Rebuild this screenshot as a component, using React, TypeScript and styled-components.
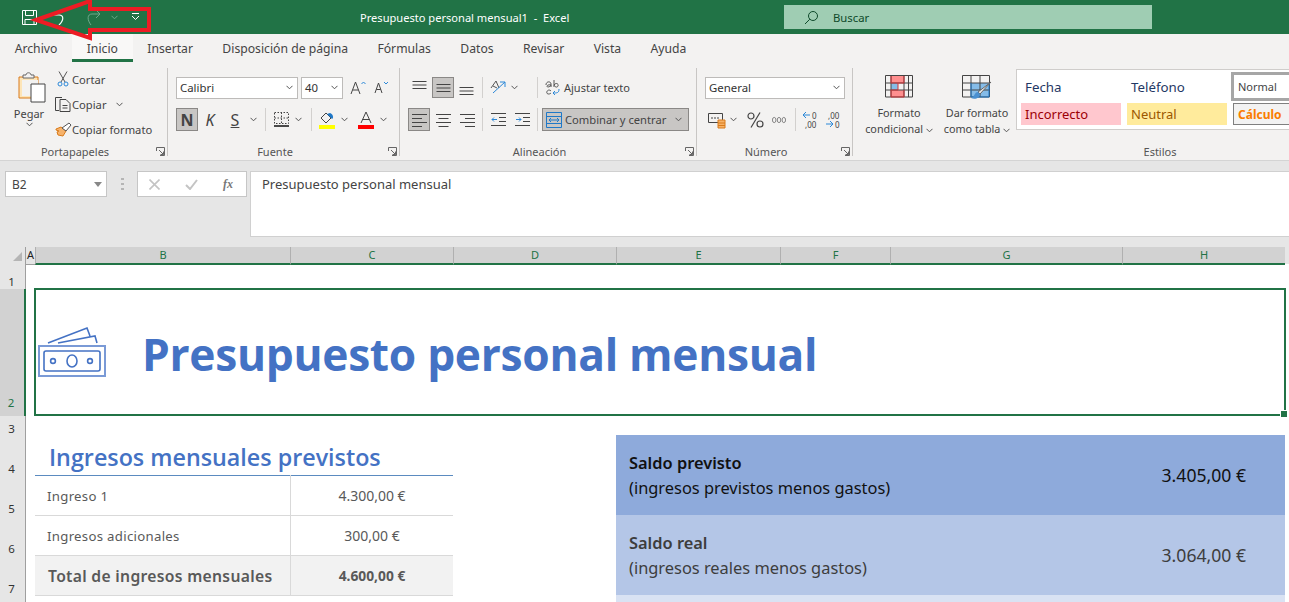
import React from "react"
import styled, { createGlobalStyle } from "styled-components"

const GREEN = "#217346"
const UI_FONT = `"Noto Sans", "Open Sans", sans-serif`
const SHEET_COLUMNS = "26px 9px 255px 163px 163px 164px 110px 232px 163px 4px"

const GlobalStyle = createGlobalStyle`
  html, body {
    margin: 0;
    padding: 0;
    background: #ffffff;
  }
  #root {
    width: 1289px;
    height: 602px;
    overflow: hidden;
  }
`

const Window = styled.div`
  position: relative;
  width: 1289px;
  height: 602px;
  overflow: hidden;
  font-family: ${UI_FONT};
  color: #444444;
`

/* title bar */
const TitleBar = styled.div`
  display: flex;
  align-items: center;
  height: 34px;
  background: ${GREEN};
  padding-left: 20px;
`
const QuickAccess = styled.div`
  display: flex;
  align-items: center;
  width: 340px;
  height: 34px;
`
const QuickSlot = styled.div<{ $w: number }>`
  display: flex;
  align-items: center;
  justify-content: center;
  width: ${(p) => p.$w}px;
  flex: none;
`
const DocTitle = styled.div`
  width: 424px;
  color: #ffffff;
  font-size: 11.1px;
  white-space: pre;
`
const SearchBox = styled.div`
  display: flex;
  align-items: center;
  gap: 14px;
  width: 368px;
  height: 24px;
  background: #9fcdb3;
  padding-left: 20px;
  box-sizing: border-box;
  color: #0e4a2a;
  font-size: 11.3px;
`

/* tabs */
const TabBar = styled.div`
  display: flex;
  height: 28px;
  background: #f3f2f1;
`
const Tab = styled.div<{ $active?: boolean }>`
  padding: 0 14.7px;
  line-height: 30px;
  font-size: 12.2px;
  box-sizing: border-box;
  background: ${(p) => (p.$active ? "#f9f8f7" : "transparent")};
  border-bottom: ${(p) => (p.$active ? `3px solid ${GREEN}` : "none")};
`

/* ribbon */
const Ribbon = styled.div`
  display: flex;
  height: 99px;
  padding-top: 6px;
  box-sizing: border-box;
  background: #f3f2f1;
  border-bottom: 1px solid #d4d4d4;
  overflow: hidden;
`
const Group = styled.div<{ $w: number; $last?: boolean }>`
  position: relative;
  display: flex;
  flex-direction: column;
  flex: none;
  width: ${(p) => p.$w}px;
  height: 88px;
  box-sizing: border-box;
  border-right: ${(p) => (p.$last ? "none" : "1px solid #c8c6c4")};
`
const GroupBody = styled.div<{ $top?: number; $left?: number; $row?: boolean }>`
  display: flex;
  flex-direction: ${(p) => (p.$row ? "row" : "column")};
  flex: 1;
  min-height: 0;
  padding-top: ${(p) => p.$top ?? 9}px;
  padding-left: ${(p) => p.$left ?? 8}px;
`
const GroupLabel = styled.div<{ $plain?: boolean }>`
  height: 20px;
  margin-bottom: -6px;
  padding-right: ${(p) => (p.$plain ? 0 : 17)}px;
  line-height: 20px;
  text-align: center;
  font-size: 11px;
  color: #555555;
`
const Launcher = styled.div`
  position: absolute;
  right: 2px;
  bottom: 0;
  width: 9px;
  height: 9px;
  line-height: 0;
`
const ControlRow = styled.div<{ $top?: number }>`
  display: flex;
  align-items: center;
  height: ${(p) => (p.$top ? 23 : 21)}px;
  margin-top: ${(p) => p.$top ?? 0}px;
  flex: none;
`
const Slot = styled.div<{ $w: number; $pressed?: boolean; $ml?: number }>`
  display: flex;
  align-items: center;
  justify-content: center;
  flex: none;
  width: ${(p) => p.$w}px;
  height: 100%;
  margin-left: ${(p) => p.$ml ?? 0}px;
  box-sizing: border-box;
  background: ${(p) => (p.$pressed ? "#c8c6c4" : "transparent")};
  border: ${(p) => (p.$pressed ? "1px solid #8a8886" : "none")};
`
const Sep = styled.div<{ $w: number }>`
  display: flex;
  justify-content: center;
  flex: none;
  width: ${(p) => p.$w}px;
  height: 100%;
  &::after {
    content: "";
    width: 1px;
    height: 100%;
    background: #d2d0ce;
  }
`
const Select = styled.div<{ $w: number; $ml?: number }>`
  display: flex;
  align-items: center;
  justify-content: space-between;
  flex: none;
  width: ${(p) => p.$w}px;
  height: 22px;
  margin-left: ${(p) => p.$ml ?? 0}px;
  padding: 0 4px 0 3px;
  box-sizing: border-box;
  background: #ffffff;
  border: 1px solid #bdbbb9;
  font-size: 11.4px;
  color: #333333;
`
const PasteColumn = styled.div`
  display: flex;
  flex-direction: column;
  align-items: center;
  flex: none;
  width: 58px;
  padding-top: 4px;
  font-size: 11px;
  & > svg:first-child {
    margin-left: 5px;
  }
`
const PasteText = styled.div`
  margin-top: 3px;
  line-height: 16px;
`
const ClipColumn = styled.div`
  display: flex;
  flex-direction: column;
  gap: 3px;
  margin-left: -4px;
`
const ClipRow = styled.div`
  display: flex;
  align-items: center;
  height: 22px;
  font-size: 11.2px;
  white-space: nowrap;
`
const ClipIcon = styled.div`
  display: flex;
  justify-content: center;
  width: 18px;
  flex: none;
`
const MergeButton = styled.div`
  display: flex;
  align-items: center;
  flex: none;
  width: 147px;
  height: 23px;
  margin-left: 2px;
  padding: 0 6px 0 3px;
  box-sizing: border-box;
  background: #c8c6c4;
  border: 1px solid #8a8886;
  font-size: 11.2px;
  white-space: nowrap;
  & > span {
    flex: 1;
    margin-left: 3px;
  }
`
const WrapText = styled.div`
  font-size: 11px;
  white-space: nowrap;
  margin-left: 2px;
`
const BigButton = styled.div<{ $w: number; $ml?: number }>`
  display: flex;
  flex-direction: column;
  align-items: center;
  flex: none;
  width: ${(p) => p.$w}px;
  margin-left: ${(p) => p.$ml ?? 0}px;
  font-size: 10.8px;
  line-height: 16px;
  white-space: nowrap;
`
const BigIcon = styled.div`
  height: 28px;
  padding-top: 5px;
  margin-bottom: 2px;
  line-height: 0;
`
const Gallery = styled.div`
  display: grid;
  grid-template-columns: 100px 100px 100px;
  grid-template-rows: 29px 22px;
  column-gap: 6px;
  row-gap: 2px;
  flex: none;
  width: 320px;
  height: 61px;
  margin: -1px 0 0 3px;
  padding: 2px 0 0 4px;
  box-sizing: border-box;
  background: #ffffff;
  border: 1px solid #cfcdcb;
`
const StyleCell = styled.div<{
  $bg?: string
  $color: string
  $bold?: boolean
  $box?: string
  $shift?: number
  $size?: number
}>`
  display: flex;
  align-items: center;
  padding-left: 4px;
  box-sizing: border-box;
  margin-left: ${(p) => p.$shift ?? 0}px;
  background: ${(p) => p.$bg ?? "transparent"};
  color: ${(p) => p.$color};
  font-size: ${(p) => p.$size ?? 13}px;
  font-weight: ${(p) => (p.$bold ? 700 : 400)};
  border: ${(p) => p.$box ?? "none"};
`
const DigitsIcon = styled.svg`
  overflow: visible;
`
const TinyDigits = styled.text`
  font-family: ${UI_FONT};
  font-size: 8px;
  fill: #444444;
`

/* formula bar */
const FormulaBand = styled.div`
  display: flex;
  align-items: flex-start;
  height: 86px;
  padding: 10px 0 0 5px;
  box-sizing: border-box;
  background: #e6e6e6;
`
const NameBox = styled.div`
  display: flex;
  align-items: center;
  justify-content: space-between;
  width: 102px;
  height: 26px;
  padding: 0 4px 0 6px;
  box-sizing: border-box;
  background: #ffffff;
  border: 1px solid #c6c6c6;
  font-size: 12px;
`
const Grip = styled.div`
  display: flex;
  justify-content: center;
  width: 30px;
  height: 26px;
  align-items: center;
`
const FunctionBox = styled.div`
  display: flex;
  align-items: center;
  justify-content: space-between;
  width: 110px;
  height: 26px;
  padding: 0 13px 0 11px;
  box-sizing: border-box;
  background: #ffffff;
  border: 1px solid #c6c6c6;
`
const FunctionMark = styled.span`
  font-family: "Liberation Serif", serif;
  font-style: italic;
  font-weight: 700;
  font-size: 12px;
  color: #777777;
`
const FormulaInput = styled.div`
  flex: 1;
  height: 66px;
  margin-left: 3px;
  padding: 3px 0 0 11px;
  box-sizing: border-box;
  background: #ffffff;
  border: 1px solid #d0d0d0;
  border-right: none;
  font-size: 13px;
  color: #444444;
`

/* sheet */
const ColumnHeader = styled.div`
  display: grid;
  grid-template-columns: ${SHEET_COLUMNS};
  height: 17px;
  background: #e6e6e6;
`
const Corner = styled.div`
  display: flex;
  justify-content: flex-end;
  align-items: flex-end;
  padding: 0 3px 3px 0;
  border-right: 1px solid #9f9f9f;
  border-bottom: 1px solid #9f9f9f;
`
const ColumnCell = styled.div<{ $plain?: boolean }>`
  text-align: center;
  font-size: 11px;
  line-height: 16px;
  box-sizing: border-box;
  background: ${(p) => (p.$plain ? "#e6e6e6" : "#d2d2d2")};
  color: ${(p) => (p.$plain ? "#222222" : GREEN)};
  border-left: ${(p) => (p.$plain ? "none" : "1px solid #b0b0b0")};
  border-bottom: ${(p) => (p.$plain ? "1px solid #9f9f9f" : `2px solid ${GREEN}`)};
`
const Sheet = styled.div`
  display: grid;
  grid-template-columns: ${SHEET_COLUMNS};
  grid-template-rows: 25px 127px 19px 40px 40px 40px 40px 40px;
  background: #ffffff;
`
const RowHead = styled.div<{ $row: number; $active?: boolean; $lift?: number }>`
  grid-column: 1;
  grid-row: ${(p) => p.$row};
  display: flex;
  align-items: flex-end;
  justify-content: center;
  padding: 0 2px ${(p) => p.$lift ?? 0}px 0;
  margin-bottom: -1px;
  box-sizing: border-box;
  font-size: 11.5px;
  line-height: 12px;
  background: ${(p) => (p.$active ? "#d2d2d2" : "#e6e6e6")};
  color: ${(p) => (p.$active ? GREEN : "#333333")};
  border-bottom: 1px solid #a8a8a8;
  border-right: ${(p) => (p.$active ? `2px solid ${GREEN}` : "1px solid #9f9f9f")};
`
const TitleCell = styled.div`
  grid-column: 3 / 10;
  grid-row: 2;
  position: relative;
  display: flex;
  align-items: center;
  margin: -1px -1px 0 -1px;
  padding: 0 0 0 2px;
  box-sizing: border-box;
  border: 2px solid ${GREEN};
`
const FillHandle = styled.div`
  position: absolute;
  right: -4px;
  bottom: -4px;
  width: 6px;
  height: 6px;
  background: ${GREEN};
  border: 1px solid #ffffff;
`
const MainTitle = styled.div`
  margin: 0 0 0 36px;
  padding-top: 4px;
  color: #4472c4;
  font-family: "Open Sans", sans-serif;
  font-weight: 700;
  font-size: 44.3px;
  letter-spacing: -0.3px;
  white-space: nowrap;
`
const SectionHead = styled.div`
  grid-column: 3 / 5;
  grid-row: 4;
  display: flex;
  align-items: center;
  margin-bottom: -1px;
  padding: 3px 0 0 14px;
  box-sizing: border-box;
  color: #4472c4;
  font-family: "Open Sans", sans-serif;
  font-weight: 600;
  font-size: 23.3px;
  border-bottom: 1px solid #5b8bc0;
`
const LabelCell = styled.div<{ $row: number; $total?: boolean }>`
  grid-column: 3;
  grid-row: ${(p) => p.$row};
  display: flex;
  align-items: center;
  margin-top: ${(p) => (p.$total ? 1 : 0)}px;
  margin-bottom: -1px;
  padding: ${(p) => (p.$total ? 0 : 1)}px 0 0 ${(p) => (p.$total ? 13 : 12)}px;
  box-sizing: border-box;
  color: #595959;
  font-size: ${(p) => (p.$total ? 15.7 : 13.2)}px;
  font-weight: ${(p) => (p.$total ? 600 : 400)};
  letter-spacing: 0.3px;
  background: ${(p) => (p.$total ? "#f2f2f2" : "transparent")};
  border-bottom: 1px solid #d9d9d9;
`
const AmountCell = styled.div<{ $row: number; $total?: boolean }>`
  grid-column: 4;
  grid-row: ${(p) => p.$row};
  display: flex;
  align-items: center;
  justify-content: center;
  margin-top: ${(p) => (p.$total ? 1 : 0)}px;
  margin-bottom: -1px;
  padding-top: ${(p) => (p.$total ? 0 : 1)}px;
  box-sizing: border-box;
  color: #595959;
  font-size: ${(p) => (p.$total ? 13.8 : 14)}px;
  font-weight: ${(p) => (p.$total ? 700 : 400)};
  background: ${(p) => (p.$total ? "#f2f2f2" : "transparent")};
  border-left: 1px solid #d9d9d9;
  border-bottom: 1px solid #d9d9d9;
`
const BalanceRow = styled.div<{ $from: number; $to: number; $bg: string; $dark?: boolean }>`
  grid-column: 6 / 10;
  grid-row: ${(p) => p.$from} / ${(p) => p.$to};
  display: flex;
  align-items: center;
  justify-content: space-between;
  padding: 0 39px 0 13px;
  background: ${(p) => p.$bg};
  color: ${(p) => (p.$dark ? "#111111" : "#3d3d3d")};
`
const BalanceText = styled.div`
  font-size: 16.4px;
  line-height: 25px;
  & > strong {
    display: block;
    font-weight: 600;
  }
`
const BalanceValue = styled.div`
  font-size: 17.6px;
`
const MarkArrow = styled.svg`
  position: absolute;
  left: 0;
  top: 0;
  pointer-events: none;
`

/* icons */
const Chevron = ({ color = "#555555" }: { color?: string }) => (
  <svg width="7" height="5" viewBox="0 0 7 5" fill="none">
    <path d="M0.5 0.8 3.5 3.8 6.5 0.8" stroke={color} strokeWidth="1" />
  </svg>
)
const Lines = ({ widths, left = 0 }: { widths: number[]; left?: number }) => (
  <svg width="15" height="14" viewBox="0 0 15 14" stroke="#444444" strokeWidth="1">
    {widths.map((w, i) => (
      <path key={i} d={`M${left === 2 ? 15 - w : left === 1 ? (15 - w) / 2 : 0} ${1.5 + i * 4}h${w}`} />
    ))}
  </svg>
)
const VAlign = ({ offset }: { offset: number }) => (
  <svg width="15" height="14" viewBox="0 0 15 14" stroke="#444444" strokeWidth="1">
    {[0, 3.5, 7].map((y) => (
      <path key={y} d={`M0.5 ${offset + y + 0.5}h14`} />
    ))}
  </svg>
)
const Launch = () => (
  <svg width="9" height="9" viewBox="0 0 9 9" fill="none" stroke="#666666">
    <path d="M0.5 4V0.5H8.5V8.5H4M3 3 7.5 7.5M7.5 4.5V7.5H4.5" />
  </svg>
)
const FormatTableIcon = () => (
  <svg width="29" height="23" viewBox="0 0 29 23">
    <path d="M6 1h13v7H6zM6 15h13v7H6z" fill="#ff8f8f" />
    <path d="M6 8h7v7H6z" fill="#85bce8" />
    <path d="M0.5 .5h27v21.5H.5zM.5 8h27M.5 15h27M6 .5v21.5M19 .5v21.5M23.5 .5v21.5" fill="none" stroke="#444444" />
    <path d="M6 1v7h7v7h-7v7h13v-7M19 1v7h-6" fill="none" stroke="#d13438" />
  </svg>
)
const TableBrushIcon = () => (
  <svg width="30" height="28" viewBox="0 0 30 28">
    <path d="M9 8h18v14H9z" fill="#85bce8" />
    <path d="M.5 .5h27v21.5H.5zM.5 8h27M.5 15h27M9 .5v21.5M18 .5v21.5" fill="none" stroke="#444444" />
    <path d="M9 8v14h18V8" fill="none" stroke="#1e78c8" />
    <path d="M29 7 18 19l-2-2z" fill="#e8e8e8" stroke="#666666" />
    <path d="M16 17c-4 0-3 5-7 6 4 2 9 0 9-4z" fill="#4a90d0" />
  </svg>
)
const MoneyIcon = () => (
  <svg width="68" height="52" viewBox="0 0 68 52" fill="none" stroke="#4472c4" strokeWidth="1.6">
    <path d="M10 17 49 2l3 8M20 17l37-7 2 7" />
    <rect x="1" y="20" width="66" height="30" stroke="#7a9ad6" strokeWidth="2" />
    <rect x="6" y="25" width="56" height="20" rx="2" />
    <ellipse cx="34" cy="35" rx="5" ry="6" />
    <circle cx="15" cy="35" r="2.4" />
    <circle cx="52" cy="35" r="2.4" />
  </svg>
)

const App: React.FC = () => {
  return (
    <Window>
      <GlobalStyle />
      <TitleBar>
        <QuickAccess>
          <QuickSlot $w={18}>
            <svg width="17" height="17" viewBox="0 0 17 17" fill="none" stroke="#ffffff">
              <path d="M1.5 1.5h14v14h-14zM4.5 1.5v5h8v-5M4 15.5v-5h9v5" />
            </svg>
          </QuickSlot>
          <QuickSlot $w={38}>
            <svg width="18" height="16" viewBox="0 0 18 16" fill="none" stroke="#ffffff">
              <path d="M4 6h7c5 0 5 5 0 10" strokeWidth="1.2" />
            </svg>
          </QuickSlot>
          <QuickSlot $w={0}>
            <Chevron color="#ffffff" />
          </QuickSlot>
          <QuickSlot $w={34}>
            <svg width="18" height="18" viewBox="0 0 18 18" fill="none" stroke="#6ea88a">
              <path d="M15 6H8c-5 0-5 6-1 11M12 2l4 4-4 4" />
            </svg>
          </QuickSlot>
          <QuickSlot $w={8}>
            <Chevron color="#6ea88a" />
          </QuickSlot>
          <QuickSlot $w={34}>
            <svg width="9" height="8" viewBox="0 0 9 8" fill="none" stroke="#ffffff">
              <path d="M1 .5h7M1 3 4.5 6.5 8 3" />
            </svg>
          </QuickSlot>
        </QuickAccess>
        <DocTitle>{"Presupuesto personal mensual1  -  Excel"}</DocTitle>
        <SearchBox>
          <svg width="15" height="15" viewBox="0 0 15 15" fill="none" stroke="#0e4a2a">
            <circle cx="9" cy="6" r="4.5" />
            <path d="M5.8 9.2 1 14" />
          </svg>
          Buscar
        </SearchBox>
      </TitleBar>

      <TabBar>
        <Tab>Archivo</Tab>
        <Tab $active>Inicio</Tab>
        <Tab>Insertar</Tab>
        <Tab>Disposición de página</Tab>
        <Tab>Fórmulas</Tab>
        <Tab>Datos</Tab>
        <Tab>Revisar</Tab>
        <Tab>Vista</Tab>
        <Tab>Ayuda</Tab>
      </TabBar>

      <Ribbon>
        <Group $w={168}>
          <GroupBody $row $top={0} $left={0}>
            <PasteColumn>
              <svg width="28" height="31" viewBox="0 0 28 31" fill="none">
                <path d="M1 5h19v21H1z" fill="#fde5b8" stroke="#d97b1a" />
                <path d="M4 8h16v16H4z" fill="#f3f2f1" />
                <path d="M5 5V3h3c0-3 5-3 5 0h3v3H5z" fill="#f3f2f1" stroke="#666666" />
                <path d="M13 12h14v18H13z" fill="#ffffff" stroke="#444444" />
              </svg>
              <PasteText>Pegar</PasteText>
              <Chevron />
            </PasteColumn>
            <ClipColumn>
              <ClipRow>
                <ClipIcon>
                  <svg width="12" height="16" viewBox="0 0 12 16" fill="none">
                    <path d="M2 .5 8 11M10 .5 4 11" stroke="#555555" />
                    <circle cx="3" cy="13" r="2" stroke="#2b88d8" />
                    <circle cx="9" cy="13" r="2" stroke="#2b88d8" />
                  </svg>
                </ClipIcon>
                Cortar
              </ClipRow>
              <ClipRow>
                <ClipIcon>
                  <svg width="16" height="16" viewBox="0 0 16 16" fill="none" stroke="#444444">
                    <path d="M4 14.5H.5v-13H7M5 3.5h6l4 4v8H5zM7.5 9.5h5M7.5 12h5" />
                  </svg>
                </ClipIcon>
                Copiar
                <QuickSlot $w={26}>
                  <Chevron />
                </QuickSlot>
              </ClipRow>
              <ClipRow>
                <ClipIcon>
                  <svg width="17" height="15" viewBox="0 0 17 15" fill="none">
                    <path d="M1 7l5-2 5 4-3 5-5-1-1-3 2-1-3-1z" fill="#f6b26b" stroke="#d97b1a" />
                    <path d="M7 6l7-5 2 2-5 6z" fill="#ffffff" stroke="#555555" />
                  </svg>
                </ClipIcon>
                Copiar formato
              </ClipRow>
            </ClipColumn>
          </GroupBody>
          <GroupLabel>Portapapeles</GroupLabel>
          <Launcher>
            <Launch />
          </Launcher>
        </Group>

        <Group $w={232}>
          <GroupBody>
            <ControlRow>
              <Select $w={122}>
                Calibri
                <Chevron />
              </Select>
              <Select $w={42} $ml={3}>
                40
                <Chevron />
              </Select>
              <Slot $w={22} $ml={4}>
                <svg width="16" height="14" viewBox="0 0 16 14" fill="none" stroke="#444444">
                  <path d="M1 13 5.5 1 10 13M2.8 9h5.4" />
                  <path d="M11.5 3 13.5 1l2 2" stroke="#2b88d8" />
                </svg>
              </Slot>
              <Slot $w={24}>
                <svg width="15" height="13" viewBox="0 0 15 13" fill="none" stroke="#444444">
                  <path d="M1 12 4.5 2 8 12M2.4 8.5h4.2" />
                  <path d="M10 1l2 2 2-2" stroke="#2b88d8" />
                </svg>
              </Slot>
            </ControlRow>
            <ControlRow $top={10}>
              <Slot $w={22} $pressed>
                <strong>N</strong>
              </Slot>
              <Slot $w={24}>
                <em>K</em>
              </Slot>
              <Slot $w={26}>
                <u>S</u>
              </Slot>
              <Slot $w={10}>
                <Chevron />
              </Slot>
              <Sep $w={14} />
              <Slot $w={18}>
                <svg width="15" height="15" viewBox="0 0 15 15" fill="none" stroke="#444444">
                  <path d="M.5.5h14v11H.5zM7.5.5v11M.5 6h14" strokeDasharray="1.5 1.5" />
                  <path d="M0 14h15" stroke="#111111" strokeWidth="1.5" />
                </svg>
              </Slot>
              <Slot $w={16}>
                <Chevron />
              </Slot>
              <Sep $w={10} />
              <Slot $w={22}>
                <svg width="16" height="18" viewBox="0 0 16 18">
                  <path d="M2 7l5-5 5 5-5 5z" fill="none" stroke="#444444" />
                  <path d="M8 3l5 5c2-1 1-5-2-6z" fill="#1e78c8" />
                  <path d="M0 14h16v4H0z" fill="#ffff00" />
                </svg>
              </Slot>
              <Slot $w={12}>
                <Chevron />
              </Slot>
              <Slot $w={16} $ml={8}>
                <svg width="16" height="18" viewBox="0 0 16 18" fill="none">
                  <path d="M3 12 8 1l5 11M4.6 8.5h6.8" stroke="#444444" />
                  <path d="M0 14h16v4H0z" fill="#ff0000" />
                </svg>
              </Slot>
              <Slot $w={18}>
                <Chevron />
              </Slot>
            </ControlRow>
          </GroupBody>
          <GroupLabel>Fuente</GroupLabel>
          <Launcher>
            <Launch />
          </Launcher>
        </Group>

        <Group $w={297}>
          <GroupBody>
            <ControlRow>
              <Slot $w={22}>
                <VAlign offset={0} />
              </Slot>
              <Slot $w={22} $ml={2} $pressed>
                <VAlign offset={3} />
              </Slot>
              <Slot $w={24}>
                <VAlign offset={6} />
              </Slot>
              <Sep $w={8} />
              <Slot $w={24}>
                <svg width="17" height="17" viewBox="0 0 17 17" fill="none" stroke="#555555">
                  <path d="M1 9 6 2l3 7M3 7l4 2" />
                  <path d="M3 14 15 3M10 3h5v5" stroke="#2b88d8" />
                </svg>
              </Slot>
              <Slot $w={8}>
                <Chevron />
              </Slot>
              <Slot $w={14} />
              <Sep $w={10} />
              <Slot $w={20}>
                <svg width="15" height="17" viewBox="0 0 15 17" fill="none" stroke="#555555">
                  <path d="M1 6c0-4 5-4 5-1v3M6 6c-4-1-5 2-3 2 1 0 3-1 3-2M9 1v7M9 6c2-3 5-1 4 1s-3 1-4-1M6 12c-3-3-6 2-3 3 1 0 2 0 3-1" />
                  <path d="M14 10c0 4-2 4-6 4M10 12l-2 2 2 2" stroke="#2b88d8" />
                </svg>
              </Slot>
              <WrapText>Ajustar texto</WrapText>
            </ControlRow>
            <ControlRow $top={10}>
              <Slot $w={22} $pressed>
                <Lines widths={[15, 10, 15, 10]} />
              </Slot>
              <Slot $w={26}>
                <Lines widths={[15, 10, 15, 10]} left={1} />
              </Slot>
              <Slot $w={22}>
                <Lines widths={[15, 10, 15, 10]} left={2} />
              </Slot>
              <Sep $w={8} />
              <Slot $w={24}>
                <svg width="15" height="13" viewBox="0 0 15 13" fill="none" stroke="#444444">
                  <path d="M0 .5h15M8 4.5h7M8 8.5h7M0 12.5h15" />
                  <path d="M6 6.5H1M3 4.5l-2 2 2 2" stroke="#2b88d8" />
                </svg>
              </Slot>
              <Slot $w={24}>
                <svg width="15" height="13" viewBox="0 0 15 13" fill="none" stroke="#444444">
                  <path d="M0 .5h15M8 4.5h7M8 8.5h7M0 12.5h15" />
                  <path d="M1 6.5h5M4 4.5l2 2-2 2" stroke="#2b88d8" />
                </svg>
              </Slot>
              <Sep $w={6} />
              <MergeButton>
                <svg width="16" height="16" viewBox="0 0 16 16" fill="none">
                  <path d="M.5.5h15v15H.5zM.5 4.5h15M.5 11.5h15" stroke="#1e78c8" />
                  <path d="M3 8h10M5 6 3 8l2 2M11 6l2 2-2 2" stroke="#1e78c8" />
                </svg>
                <span>Combinar y centrar</span>
                <Chevron />
              </MergeButton>
            </ControlRow>
          </GroupBody>
          <GroupLabel>Alineación</GroupLabel>
          <Launcher>
            <Launch />
          </Launcher>
        </Group>

        <Group $w={156}>
          <GroupBody>
            <ControlRow>
              <Select $w={140}>
                General
                <Chevron />
              </Select>
            </ControlRow>
            <ControlRow $top={10}>
              <Slot $w={23}>
                <svg width="18" height="18" viewBox="0 0 18 18" fill="none">
                  <path d="M.5 2.5h14v9H.5z" stroke="#444444" />
                  <path d="M3 7h8" stroke="#444444" strokeDasharray="2 1" />
                  <path d="M10 9h7v8h-7z" fill="#f7b267" stroke="#d97b1a" />
                  <path d="M10 12h7M10 14.5h7" stroke="#d97b1a" />
                </svg>
              </Slot>
              <Slot $w={10}>
                <Chevron />
              </Slot>
              <Slot $w={34}>
                <svg width="17" height="16" viewBox="0 0 17 16" fill="none" stroke="#444444" strokeWidth="1.2">
                  <circle cx="4" cy="4" r="3" />
                  <circle cx="13" cy="12" r="3" />
                  <path d="M13 .5 4 15.5" />
                </svg>
              </Slot>
              <Slot $w={14}>
                <svg width="16" height="8" viewBox="0 0 16 8" fill="none" stroke="#777777">
                  <ellipse cx="2.5" cy="4" rx="2" ry="3" />
                  <ellipse cx="8" cy="4" rx="2" ry="3" />
                  <ellipse cx="13.5" cy="4" rx="2" ry="3" />
                </svg>
              </Slot>
              <Sep $w={18} />
              <Slot $w={12}>
                <DigitsIcon width="16" height="18" viewBox="0 0 16 18" fill="none">
                  <path d="M8 4H1M4 1 1 4l3 3" stroke="#2b88d8" />
                  <TinyDigits x="10" y="8">
                    0
                  </TinyDigits>
                  <TinyDigits x="3" y="17">
                    ,00
                  </TinyDigits>
                </DigitsIcon>
              </Slot>
              <Slot $w={34}>
                <DigitsIcon width="16" height="18" viewBox="0 0 16 18" fill="none">
                  <TinyDigits x="3" y="8">
                    ,00
                  </TinyDigits>
                  <path d="M1 13h7M5 10l3 3-3 3" stroke="#2b88d8" />
                  <TinyDigits x="10" y="17">
                    0
                  </TinyDigits>
                </DigitsIcon>
              </Slot>
            </ControlRow>
          </GroupBody>
          <GroupLabel>Número</GroupLabel>
          <Launcher>
            <Launch />
          </Launcher>
        </Group>

        <Group $w={614} $last>
          <GroupBody $row $top={2} $left={10}>
            <BigButton $w={72}>
              <BigIcon>
                <FormatTableIcon />
              </BigIcon>
              Formato
              <div>
                condicional <Chevron />
              </div>
            </BigButton>
            <BigButton $w={72} $ml={6}>
              <BigIcon>
                <TableBrushIcon />
              </BigIcon>
              Dar formato
              <div>
                como tabla <Chevron />
              </div>
            </BigButton>
            <Gallery>
              <StyleCell $color="#1f3864" $size={13.3}>
                Fecha
              </StyleCell>
              <StyleCell $color="#1f3864" $size={13.3}>
                Teléfono
              </StyleCell>
              <StyleCell $color="#444444" $box="3px solid #a6a6a6" $shift={-2} $size={11}>
                Normal
              </StyleCell>
              <StyleCell $bg="#ffc7ce" $color="#9c0006">
                Incorrecto
              </StyleCell>
              <StyleCell $bg="#ffeb9c" $color="#9c5700">
                Neutral
              </StyleCell>
              <StyleCell $bg="#f2f2f2" $color="#fa7d00" $bold $box="1px solid #7f7f7f" $size={12}>
                Cálculo
              </StyleCell>
            </Gallery>
          </GroupBody>
          <GroupLabel $plain>Estilos</GroupLabel>
        </Group>
      </Ribbon>

      <FormulaBand>
        <NameBox>
          B2
          <svg width="8" height="5" viewBox="0 0 8 5">
            <path d="M0 0h8L4 5z" fill="#888888" />
          </svg>
        </NameBox>
        <Grip>
          <svg width="3" height="12" viewBox="0 0 3 12" fill="#b5b5b5">
            <path d="M0 0h3v2H0zM0 5h3v2H0zM0 10h3v2H0z" />
          </svg>
        </Grip>
        <FunctionBox>
          <svg width="11" height="11" viewBox="0 0 11 11" fill="none" stroke="#c4c4c4" strokeWidth="1.6">
            <path d="M.5.5l10 10M10.5.5l-10 10" />
          </svg>
          <svg width="13" height="11" viewBox="0 0 13 11" fill="none" stroke="#c4c4c4" strokeWidth="2">
            <path d="M1 6l4 4 7-9" />
          </svg>
          <FunctionMark>fx</FunctionMark>
        </FunctionBox>
        <FormulaInput>Presupuesto personal mensual</FormulaInput>
      </FormulaBand>

      <ColumnHeader>
        <Corner>
          <svg width="9" height="9" viewBox="0 0 9 9">
            <path d="M9 0v9H0z" fill="#b5b5b5" />
          </svg>
        </Corner>
        <ColumnCell $plain>A</ColumnCell>
        <ColumnCell>B</ColumnCell>
        <ColumnCell>C</ColumnCell>
        <ColumnCell>D</ColumnCell>
        <ColumnCell>E</ColumnCell>
        <ColumnCell>F</ColumnCell>
        <ColumnCell>G</ColumnCell>
        <ColumnCell>H</ColumnCell>
      </ColumnHeader>

      <Sheet>
        <RowHead $row={1} $lift={1}>
          1
        </RowHead>
        <RowHead $row={2} $active $lift={7}>
          2
        </RowHead>
        <RowHead $row={3}>3</RowHead>
        <RowHead $row={4}>4</RowHead>
        <RowHead $row={5}>5</RowHead>
        <RowHead $row={6}>6</RowHead>
        <RowHead $row={7}>7</RowHead>
        <RowHead $row={8} />

        <TitleCell>
          <MoneyIcon />
          <MainTitle>Presupuesto personal mensual</MainTitle>
          <FillHandle />
        </TitleCell>

        <SectionHead>Ingresos mensuales previstos</SectionHead>
        <LabelCell $row={5}>Ingreso 1</LabelCell>
        <AmountCell $row={5}>4.300,00 €</AmountCell>
        <LabelCell $row={6}>Ingresos adicionales</LabelCell>
        <AmountCell $row={6}>300,00 €</AmountCell>
        <LabelCell $row={7} $total>
          Total de ingresos mensuales
        </LabelCell>
        <AmountCell $row={7} $total>
          4.600,00 €
        </AmountCell>

        <BalanceRow $from={4} $to={6} $bg="#8eaadb" $dark>
          <BalanceText>
            <strong>Saldo previsto</strong>
            (ingresos previstos menos gastos)
          </BalanceText>
          <BalanceValue>3.405,00 €</BalanceValue>
        </BalanceRow>
        <BalanceRow $from={6} $to={8} $bg="#b4c6e7">
          <BalanceText>
            <strong>Saldo real</strong>
            (ingresos reales menos gastos)
          </BalanceText>
          <BalanceValue>3.064,00 €</BalanceValue>
        </BalanceRow>
        <BalanceRow $from={8} $to={9} $bg="#d9e2f3" />
      </Sheet>

      <MarkArrow width="160" height="44" viewBox="0 0 160 44" fill="none">
        <path d="M36 20 90 1v8h59v21H90v8z" stroke="#ed1c24" strokeWidth="4" />
      </MarkArrow>
    </Window>
  )
}

export default App
